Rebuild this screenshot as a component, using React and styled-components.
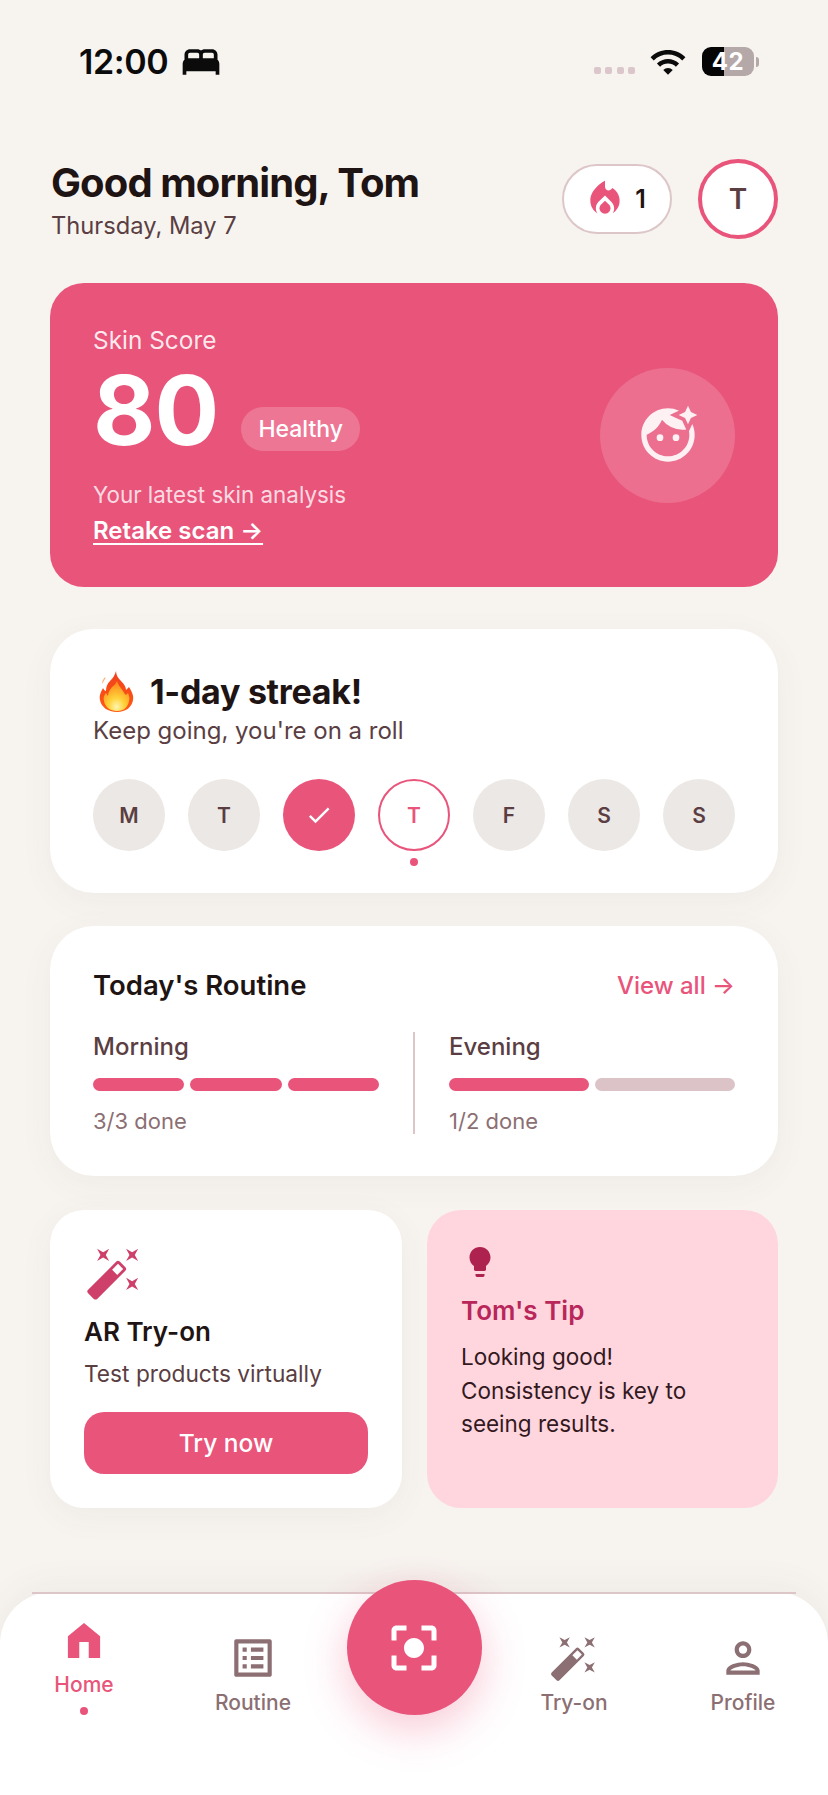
import * as React from "react"
import styled, { createGlobalStyle } from "styled-components"
import {
  MdAutoFixHigh,
  MdBed,
  MdCenterFocusStrong,
  MdCheck,
  MdFaceRetouchingNatural,
  MdLightbulb,
  MdLocalFireDepartment,
  MdOutlineListAlt,
  MdOutlinePerson,
  MdWifi,
} from "react-icons/md"

const PINK = "#E9547B"
const INK = "#1F1414"
const BROWN = "#5A3E42"
const MUTED = "#8C6F73"
const LINE = "#DDC6C8"

const GlobalStyle = createGlobalStyle`
  html, body {
    margin: 0;
    padding: 0;
    background: #F7F4F0;
  }
  body {
    font-family: Inter, "Noto Sans", sans-serif;
    color: ${INK};
  }
`

const Page = styled.div`
  width: 828px;
  height: 1795px;
  display: flex;
  flex-direction: column;
  overflow: hidden;
  background: #F7F4F0;
`

const StatusBar = styled.div`
  height: 110px;
  padding: 47px 69px 0 79px;
  box-sizing: border-box;
  display: flex;
  justify-content: space-between;
  align-items: flex-start;
`
const StatusLeft = styled.div`
  display: flex;
  align-items: center;
  gap: 11px;
  height: 29px;
  font-size: 34px;
  font-weight: 600;
  letter-spacing: -0.4px;
  color: #0b0b0b;
`
const BedIcon = styled(MdBed)`
  margin: -6px 0;
`
const StatusRight = styled.div`
  display: flex;
  align-items: center;
  height: 29px;
`
const SignalDots = styled.div`
  display: flex;
  gap: 4.3px;
  margin: 18px 14px 0 0;
`
const SignalDot = styled.span`
  width: 7px;
  height: 7px;
  border-radius: 2px;
  background: #DBC6CB;
`
const WifiIcon = styled(MdWifi)`
  color: #0b0b0b;
`
const Battery = styled.div`
  width: 52px;
  height: 29px;
  margin-left: 15px;
  border-radius: 9px;
  display: flex;
  align-items: center;
  justify-content: center;
  background: linear-gradient(90deg, #050505 42%, #B5A8A8 42%);
  color: #fff;
  font-size: 24px;
  font-weight: 700;
  line-height: 1;
  letter-spacing: 0.5px;
`
const BatteryNub = styled.span`
  width: 3px;
  height: 10px;
  margin-left: 2px;
  border-radius: 0 3px 3px 0;
  background: #B5A8A8;
`

const Main = styled.main`
  padding: 0 50px;
  display: flex;
  flex-direction: column;
`

const Header = styled.header`
  height: 173px;
  padding-top: 49px;
  box-sizing: border-box;
  display: flex;
  justify-content: space-between;
  align-items: flex-start;
`
const Greeting = styled.h1`
  margin: 0 0 0 1px;
  font-size: 40px;
  line-height: 48px;
  font-weight: 700;
  letter-spacing: -0.9px;
  color: ${INK};
`
const DateLine = styled.p`
  margin: 4px 0 0 1px;
  font-size: 23.7px;
  line-height: 30px;
  color: ${BROWN};
`
const HeaderActions = styled.div`
  display: flex;
  align-items: center;
  gap: 26px;
`
const StreakPill = styled.div`
  width: 110px;
  height: 70px;
  box-sizing: border-box;
  padding-right: 5px;
  border: 2px solid ${LINE};
  border-radius: 35px;
  background: #fff;
  display: flex;
  align-items: center;
  justify-content: center;
  gap: 8px;
  font-size: 25px;
  font-weight: 600;
  color: ${INK};
`
const Avatar = styled.div`
  width: 80px;
  height: 80px;
  box-sizing: border-box;
  border: 4px solid ${PINK};
  border-radius: 50%;
  background: #fff;
  display: flex;
  align-items: center;
  justify-content: center;
  font-size: 28px;
  font-weight: 600;
  color: ${BROWN};
`

const ScoreCard = styled.section`
  height: 304px;
  box-sizing: border-box;
  padding: 0 43px;
  border-radius: 34px;
  background: ${PINK};
  color: #fff;
  display: flex;
  justify-content: space-between;
  align-items: center;
`
const ScoreCopy = styled.div`
  align-self: flex-start;
  padding-top: 42px;
`
const ScoreLabel = styled.div`
  font-size: 24.4px;
  line-height: 30px;
  color: rgba(255, 255, 255, 0.88);
`
const ScoreRow = styled.div`
  display: flex;
  align-items: flex-end;
  gap: 23px;
  height: 92px;
  margin-top: 9px;
`
const ScoreValue = styled.div`
  font-size: 96px;
  line-height: 92px;
  font-weight: 700;
  letter-spacing: -1px;
`
const Badge = styled.span`
  height: 44px;
  width: 119px;
  margin-bottom: 5px;
  border-radius: 22px;
  background: rgba(255, 255, 255, 0.2);
  display: flex;
  align-items: center;
  justify-content: center;
  font-size: 23px;
  font-weight: 500;
`
const ScoreNote = styled.div`
  margin-top: 25px;
  font-size: 22.4px;
  line-height: 28px;
  color: rgba(255, 255, 255, 0.8);
`
const RetakeLink = styled.a`
  display: block;
  margin-top: 7px;
  font-size: 24px;
  line-height: 30px;
  font-weight: 600;
  color: #fff;
  text-decoration: underline;
  text-underline-offset: 4px;
`
const FaceBubble = styled.div`
  width: 135px;
  height: 135px;
  border-radius: 50%;
  background: rgba(255, 255, 255, 0.16);
  display: flex;
  align-items: center;
  justify-content: center;
  color: #FDF1F3;
`

const Card = styled.section`
  border-radius: 44px;
  background: #fff;
  box-shadow: 0 8px 34px rgba(70, 40, 30, 0.05);
  box-sizing: border-box;
`

const StreakCard = styled(Card)`
  height: 264px;
  margin-top: 42px;
  padding: 39px 43px 0;
`
const StreakTitle = styled.h2`
  margin: 0;
  height: 46px;
  display: flex;
  align-items: center;
  gap: 15px;
  font-size: 34px;
  font-weight: 700;
  letter-spacing: -0.3px;
  color: ${INK};
`
const FlameSvg = styled.svg`
  margin-left: 6px;
`
const StreakNote = styled.p`
  margin: 0;
  font-size: 24px;
  line-height: 34px;
  color: ${BROWN};
`
const DayRow = styled.div`
  display: flex;
  justify-content: space-between;
  margin-top: 31px;
`
const DayCircle = styled.div`
  position: relative;
  width: 72px;
  height: 72px;
  box-sizing: border-box;
  border-radius: 50%;
  display: flex;
  align-items: center;
  justify-content: center;
  font-size: 21px;
  font-weight: 600;
  background: ${({ $state }) => ($state === "done" ? PINK : $state === "today" ? "#fff" : "#ECE8E5")};
  border: ${({ $state }) => ($state === "today" ? `2px solid ${PINK}` : "none")};
  color: ${({ $state }) => ($state === "today" ? PINK : $state === "done" ? "#fff" : BROWN)};
`
const TodayDot = styled.span`
  position: absolute;
  left: 50%;
  bottom: -17px;
  width: 8px;
  height: 8px;
  margin-left: -4px;
  border-radius: 50%;
  background: ${PINK};
`

const RoutineCard = styled(Card)`
  height: 250px;
  margin-top: 33px;
  padding: 42px 43px 0;
`
const RoutineHead = styled.div`
  display: flex;
  justify-content: space-between;
  align-items: center;
  height: 34px;
`
const RoutineTitle = styled.h2`
  margin: 0;
  font-size: 27.5px;
  font-weight: 600;
  color: ${INK};
`
const ViewAll = styled.a`
  font-size: 24px;
  font-weight: 500;
  color: ${PINK};
`
const RoutineColumns = styled.div`
  display: grid;
  grid-template-columns: 1fr 1fr;
  margin-top: 30px;
`
const RoutinePart = styled.div`
  height: 102px;
  padding-top: 1px;
  box-sizing: border-box;
  &:first-child {
    padding-right: 34px;
    border-right: 2px solid ${LINE};
    margin-right: -1px;
  }
  &:last-child {
    padding-left: 35px;
  }
`
const PartName = styled.div`
  font-size: 24px;
  line-height: 28px;
  font-weight: 500;
  color: ${BROWN};
`
const Bars = styled.div`
  display: flex;
  gap: 6px;
  margin-top: 17px;
`
const Bar = styled.span`
  flex: 1;
  height: 13px;
  border-radius: 7px;
  background: ${({ $on }) => ($on ? PINK : "#DCC3C7")};
`
const PartCount = styled.div`
  margin-top: 16px;
  font-size: 22px;
  line-height: 28px;
  color: ${MUTED};
`

const BottomGrid = styled.div`
  display: grid;
  grid-template-columns: 352px 351px;
  gap: 25px;
  margin-top: 34px;
  height: 298px;
`
const TryCard = styled(Card)`
  border-radius: 34px;
  padding: 34px 34px 0;
`
const WandIcon = styled(MdAutoFixHigh)`
  display: block;
  margin-left: 1px;
  color: #CE4069;
`
const TryTitle = styled.h3`
  margin: 13px 0 0;
  font-size: 26px;
  line-height: 34px;
  font-weight: 600;
  color: ${INK};
`
const TryNote = styled.p`
  margin: 9px 0 0;
  font-size: 22.7px;
  line-height: 32px;
  color: ${BROWN};
`
const TryButton = styled.button`
  display: block;
  width: 100%;
  height: 62px;
  margin-top: 22px;
  border: 0;
  border-radius: 20px;
  background: ${PINK};
  color: #fff;
  font-family: inherit;
  font-size: 24.5px;
  font-weight: 500;
`
const TipCard = styled.section`
  border-radius: 34px;
  background: #FFD6DE;
  padding: 34px 34px 0;
  box-sizing: border-box;
  color: #B9265A;
`
const TipIcon = styled(MdLightbulb)`
  display: block;
  margin-left: 1px;
  color: #AE2250;
`
const TipTitle = styled.h3`
  margin: 14px 0 0;
  font-size: 26px;
  line-height: 34px;
  font-weight: 600;
`
const TipBody = styled.p`
  margin: 12px 0 0;
  font-size: 22.5px;
  line-height: 33.5px;
  color: #33191E;
`

const BottomNav = styled.nav`
  position: relative;
  margin-top: auto;
  height: 203px;
  box-sizing: border-box;
  border-radius: 52px 52px 0 0;
  background: #fff;
  box-shadow: 0 -8px 34px rgba(70, 40, 30, 0.05);
  display: grid;
  grid-template-columns: 168px 170px 152px 168px 170px;
  align-items: start;
  &::before {
    content: "";
    position: absolute;
    top: 0;
    left: 32px;
    right: 32px;
    height: 2px;
    background: ${LINE};
  }
`
const NavItem = styled.div`
  display: flex;
  flex-direction: column;
  align-items: center;
  padding-top: ${({ $active }) => ($active ? 29 : 41)}px;
  color: ${({ $active }) => ($active ? PINK : MUTED)};
  font-size: 21px;
  line-height: 26px;
  font-weight: 500;
`
const NavLabel = styled.span`
  margin-top: ${({ $active }) => ($active ? 13 : 7)}px;
`
const NavDot = styled.span`
  width: 8px;
  height: 8px;
  margin-top: 9px;
  border-radius: 50%;
  background: ${PINK};
`
const ScanButton = styled.button`
  position: relative;
  z-index: 1;
  justify-self: center;
  width: 135px;
  height: 135px;
  margin-top: -12px;
  padding: 0;
  border: 0;
  border-radius: 50%;
  background: ${PINK};
  color: #fff;
  display: flex;
  align-items: center;
  justify-content: center;
  box-shadow: 0 14px 44px rgba(233, 84, 123, 0.32);
`

const HomeIcon = () => (
  <svg width="36" height="38" viewBox="0 0 38 40" fill={PINK}>
    <path d="M19 2 36 16V39H24V22H14V39H2V16Z" />
  </svg>
)

// the emoji font isn't available here, so the flame is drawn
const FlameEmoji = () => (
  <FlameSvg width="36" height="42" viewBox="0 0 36 42">
    <defs>
      <linearGradient id="flameOuter" x1="0" y1="0" x2="0" y2="1">
        <stop offset="0" stopColor="#F0401E" />
        <stop offset="1" stopColor="#FF5A12" />
      </linearGradient>
      <radialGradient id="flameInner" cx="0.5" cy="0.86" r="0.8">
        <stop offset="0" stopColor="#FFF6B0" />
        <stop offset="0.38" stopColor="#FFD23A" />
        <stop offset="1" stopColor="#FF8A1C" />
      </radialGradient>
    </defs>
    <path fill="url(#flameOuter)" d="M17 1c0 4 2 7 5 10 3 3 5 6 5 9l3-3c3 5 5 9 4 13-1 7-7 12-16 12S2 37 1 30c-1-5 1-8 3-12 1 2 2 3 3 3 0-4 1-7 4-10 3-3 5-6 6-10Z" />
    <path fill="#FFB27A" d="M3 14c0-2 1-5 3-7l.5 1C5.500 10 4.500 12 3 14Z" />
    <path fill="url(#flameInner)" d="M18 11c1 4 4 7 6 10 1 2 2 3 3 4l2-2c1 3 2 5 1 8-1 6-5 10-12 10S6 37 5 31c-1-3 0-6 2-8l2 3c0-4 2-6 4-9 3-2 4-4 5-6Z" />
  </FlameSvg>
)

const days = [
  { label: "M" },
  { label: "T" },
  { state: "done" },
  { label: "T", state: "today" },
  { label: "F" },
  { label: "S" },
  { label: "S" },
]

export default function App() {
  return (
    <Page>
      <GlobalStyle />
      <StatusBar>
        <StatusLeft>
          12:00
          <BedIcon size={44} />
        </StatusLeft>
        <StatusRight>
          <SignalDots>
            {[0, 1, 2, 3].map((i) => (
              <SignalDot key={i} />
            ))}
          </SignalDots>
          <WifiIcon size={38} />
          <Battery>42</Battery>
          <BatteryNub />
        </StatusRight>
      </StatusBar>

      <Main>
        <Header>
          <div>
            <Greeting>Good morning, Tom</Greeting>
            <DateLine>Thursday, May 7</DateLine>
          </div>
          <HeaderActions>
            <StreakPill>
              <MdLocalFireDepartment size={44} color={PINK} />1
            </StreakPill>
            <Avatar>T</Avatar>
          </HeaderActions>
        </Header>

        <ScoreCard>
          <ScoreCopy>
            <ScoreLabel>Skin Score</ScoreLabel>
            <ScoreRow>
              <ScoreValue>80</ScoreValue>
              <Badge>Healthy</Badge>
            </ScoreRow>
            <ScoreNote>Your latest skin analysis</ScoreNote>
            <RetakeLink>Retake scan →</RetakeLink>
          </ScoreCopy>
          <FaceBubble>
            <MdFaceRetouchingNatural size={64} />
          </FaceBubble>
        </ScoreCard>

        <StreakCard>
          <StreakTitle>
            <FlameEmoji />
            1-day streak!
          </StreakTitle>
          <StreakNote>Keep going, you're on a roll</StreakNote>
          <DayRow>
            {days.map((day, i) => (
              <DayCircle key={i} $state={day.state}>
                {day.state === "done" ? <MdCheck size={28} /> : day.label}
                {day.state === "today" && <TodayDot />}
              </DayCircle>
            ))}
          </DayRow>
        </StreakCard>

        <RoutineCard>
          <RoutineHead>
            <RoutineTitle>Today's Routine</RoutineTitle>
            <ViewAll>View all →</ViewAll>
          </RoutineHead>
          <RoutineColumns>
            <RoutinePart>
              <PartName>Morning</PartName>
              <Bars>
                <Bar $on />
                <Bar $on />
                <Bar $on />
              </Bars>
              <PartCount>3/3 done</PartCount>
            </RoutinePart>
            <RoutinePart>
              <PartName>Evening</PartName>
              <Bars>
                <Bar $on />
                <Bar />
              </Bars>
              <PartCount>1/2 done</PartCount>
            </RoutinePart>
          </RoutineColumns>
        </RoutineCard>

        <BottomGrid>
          <TryCard>
            <WandIcon size={58} />
            <TryTitle>AR Try-on</TryTitle>
            <TryNote>Test products virtually</TryNote>
            <TryButton>Try now</TryButton>
          </TryCard>
          <TipCard>
            <TipIcon size={36} />
            <TipTitle>Tom's Tip</TipTitle>
            <TipBody>
              Looking good!
              <br />
              Consistency is key to
              <br />
              seeing results.
            </TipBody>
          </TipCard>
        </BottomGrid>
      </Main>

      <BottomNav>
        <NavItem $active>
          <HomeIcon />
          <NavLabel $active>Home</NavLabel>
          <NavDot />
        </NavItem>
        <NavItem>
          <MdOutlineListAlt size={50} />
          <NavLabel>Routine</NavLabel>
        </NavItem>
        <ScanButton>
          <MdCenterFocusStrong size={60} />
        </ScanButton>
        <NavItem>
          <MdAutoFixHigh size={50} />
          <NavLabel>Try-on</NavLabel>
        </NavItem>
        <NavItem>
          <MdOutlinePerson size={50} />
          <NavLabel>Profile</NavLabel>
        </NavItem>
      </BottomNav>
    </Page>
  )
}
